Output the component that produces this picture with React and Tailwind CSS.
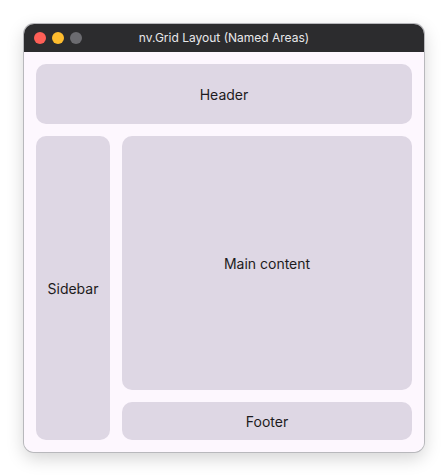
const Cell = ({ className = '', children }) => (
  <div className={`flex items-center justify-center rounded-[10px] bg-[#ded7e4] text-[14px] text-[#1d1b20] ${className}`}>
    {children}
  </div>
);

const App = () => {
  return (
    <div className="min-h-[476px] w-[448px] bg-white pl-6 pt-6" style={{ fontFamily: 'Inter, "Liberation Sans", sans-serif' }}>
      <div className="w-[400px] overflow-hidden rounded-[10px] shadow-[0_6px_18px_rgba(0,0,0,0.18)] ring-1 ring-[#b8b8bc]">
        <div className="relative flex h-[28px] items-center bg-[#2c2c2e] px-[10px]">
          <div className="flex gap-[6px]">
            <span className="h-3 w-3 rounded-full bg-[#fe5f57]" />
            <span className="h-3 w-3 rounded-full bg-[#febc2e]" />
            <span className="h-3 w-3 rounded-full bg-[#6b6b70]" />
          </div>
          <div className="absolute inset-0 flex items-center justify-center text-[12px] text-[#e8e8ea]">
            nv.Grid Layout (Named Areas)
          </div>
        </div>
        <div className="grid h-[400px] grid-cols-[74px_1fr] grid-rows-[60px_1fr_38px] gap-3 bg-[#fdf7fe] p-3">
          <Cell className="col-span-2">Header</Cell>
          <Cell className="row-span-2">Sidebar</Cell>
          <Cell>Main content</Cell>
          <Cell>Footer</Cell>
        </div>
      </div>
    </div>
  );
};

export default App;
